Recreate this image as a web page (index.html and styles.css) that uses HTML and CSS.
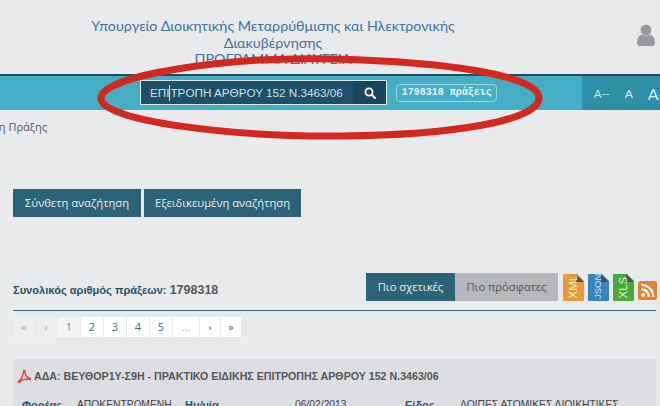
FILE: index.html
```html
<!DOCTYPE html>
<html lang="el">
<head>
    <meta charset="UTF-8">
    <title>Πρόγραμμα Διαύγεια</title>
    <link rel="stylesheet" href="styles.css">
</head>
<body>
    <header class="top">
        <div class="ministry">
            <div>Υπουργείο Διοικητικής Μεταρρύθμισης και Ηλεκτρονικής</div>
            <div>Διακυβέρνησης</div>
            <div>ΠΡΟΓΡΑΜΜΑ ΔΙΑΥΓΕΙΑ</div>
        </div>
        <svg class="user" viewBox="0 0 18 22" width="18" height="22">
            <circle cx="9" cy="6" r="5.4" fill="#97999c"/>
            <path d="M0 19c0-6 3-8 5-8.500 2 1.500 6 1.500 8 0 2 .5 5 2.500 5 8.500 0 2-1 3-3 3H3c-2 0-3-1-3-3z" fill="#97999c"/>
        </svg>
    </header>

    <div class="bar">
        <div class="search">
            <span class="search-text">ΕΠΙ<i class="caret"></i>ΤΡΟΠΗ ΑΡΘΡΟΥ 152 Ν.3463/06</span>
            <span class="search-btn">
                <svg viewBox="0 0 12 12" width="12" height="12">
                    <circle cx="5" cy="5" r="3.600" fill="none" stroke="#fff" stroke-width="1.800"/>
                    <path d="M7.800 7.800L11 11" stroke="#fff" stroke-width="2" stroke-linecap="round"/>
                </svg>
            </span>
        </div>
        <span class="count">1798318 πράξεις</span>
        <div class="sizes">
            <span class="size-s">A--</span>
            <span class="size-m">A</span>
            <span class="size-l">A+</span>
        </div>
    </div>

    <div class="crumb"><span>Αναζήτηση Πράξης</span></div>

    <div class="search-links">
        <a class="btn btn-first">Σύνθετη αναζήτηση</a>
        <a class="btn btn-second">Εξειδικευμένη αναζήτηση</a>
    </div>

    <div class="toolbar">
        <div class="total">Συνολικός αριθμός πράξεων: <b>1798318</b></div>
        <a class="tab tab-on">Πιο σχετικές</a>
        <a class="tab tab-off">Πιο πρόσφατες</a>
        <div class="exports">
            <svg viewBox="0 0 21 27" width="21" height="27">
                <path d="M1 0h13l7 7v19a1 1 0 0 1-1 1H1a1 1 0 0 1-1-1V1a1 1 0 0 1 1-1z" fill="#e79a3c"/>
                <path d="M13 0l8 8h-8z" fill="#4c4f52"/>
                <text class="file-label" transform="translate(13.500 24.500) rotate(-90)" fill="#fff3c0">XML</text>
            </svg>
            <svg viewBox="0 0 21 27" width="21" height="27">
                <path d="M1 0h13l7 7v19a1 1 0 0 1-1 1H1a1 1 0 0 1-1-1V1a1 1 0 0 1 1-1z" fill="#3486bd"/>
                <path d="M13 0l8 8h-8z" fill="#4c4f52"/>
                <text class="file-label file-label-sm" transform="translate(13 25) rotate(-90)" fill="#bfe3f5">JSON</text>
            </svg>
            <svg viewBox="0 0 21 27" width="21" height="27">
                <path d="M1 0h13l7 7v19a1 1 0 0 1-1 1H1a1 1 0 0 1-1-1V1a1 1 0 0 1 1-1z" fill="#4aa83c"/>
                <path d="M13 0l8 8h-8z" fill="#4c4f52"/>
                <text class="file-label" transform="translate(13.500 24.500) rotate(-90)" fill="#d8f5c8">XLS</text>
            </svg>
            <svg class="rss" viewBox="0 0 20 20" width="19" height="19">
                <rect width="20" height="20" rx="3" fill="#e5822f"/>
                <circle cx="5.500" cy="14.500" r="2.200" fill="#fff"/>
                <path d="M3.500 8.500a8 8 0 0 1 8 8M3.500 4a12.500 12.500 0 0 1 12.500 12.500" fill="none" stroke="#fff" stroke-width="2.400"/>
            </svg>
        </div>
    </div>

    <ul class="pager">
        <li class="off">«</li>
        <li class="off">‹</li>
        <li class="cur">1</li>
        <li>2</li>
        <li>3</li>
        <li>4</li>
        <li>5</li>
        <li class="off dots">...</li>
        <li class="arrow">›</li>
        <li class="arrow">»</li>
    </ul>

    <article class="result">
        <h3 class="result-title">
            <svg viewBox="0 0 14 14" width="14" height="14">
                <path d="M1.500 12.500C4 11 6 7 6.500 2.500c0-1.500 1.500-1.500 1.500 0C8 6 10 8.500 12.500 9c1.500.3 1 1.800-.5 1.500C9 10 5 10.500 3 12.800c-1 1-2 .4-1.500-.3z" fill="none" stroke="#e0483c" stroke-width="1.500"/>
            </svg>
            ΑΔΑ: ΒΕΥΘΟΡ1Υ-Σ9Η - ΠΡΑΚΤΙΚΟ ΕΙΔΙΚΗΣ ΕΠΙΤΡΟΠΗΣ ΑΡΘΡΟΥ 152 Ν.3463/06
        </h3>
        <div class="meta">
            <b class="m-a">Φορέας</b><span class="m-b">ΑΠΟΚΕΝΤΡΩΜΕΝΗ</span>
            <b class="m-c">Ημ/νία</b><span class="m-d">06/02/2013</span>
            <b class="m-e">Είδος</b><span>ΛΟΙΠΕΣ ΑΤΟΜΙΚΕΣ ΔΙΟΙΚΗΤΙΚΕΣ</span>
        </div>
    </article>

    <!-- κόκκινος κύκλος πάνω από τη μπάρα -->
    <svg class="circle-mark" viewBox="0 0 660 406" width="660" height="406">
        <path d="M335 59C225 56 98 76 101 99c3 22 130 38 240 37 110-1 198-15 198-38S445 62 335 59z" fill="none" stroke="#d3281f" stroke-width="7"/>
    </svg>
</body>
</html>
```

FILE: styles.css
```css
html, body {
    margin: 0;
    padding: 0;
}

body {
    width: 660px;
    height: 406px;
    overflow: hidden;
    position: relative;
    background-color: #e9eaec;
    font-family: 'Open Sans', sans-serif;
    color: #555;
}

.top {
    height: 74px;
    display: flex;
    box-sizing: border-box;
    padding-top: 18px;
}

.ministry {
    width: 546px;
    text-align: center;
    font-family: 'Lato', 'Open Sans', sans-serif;
    font-size: 14.300px;
    line-height: 16.500px;
    color: #3f719f;
    height: 56px;
    overflow: hidden;
}

.user {
    margin: 6px 0 0 91px;
}

.bar {
    height: 34px;
    border-top: 2px solid #1d4f66;
    background-color: #45adc4;
    display: flex;
    align-items: center;
    padding-left: 140px;
}

.search {
    width: 248px;
    height: 25px;
    box-sizing: border-box;
    border: 1px solid #dcedf1;
    background-color: #1e4f66;
    display: flex;
    margin-top: -1px;
}

.search-text {
    width: 212px;
    box-sizing: border-box;
    padding-left: 9px;
    font-family: 'Liberation Sans', sans-serif;
    font-size: 11.700px;
    line-height: 23px;
    color: #d5dfe4;
    white-space: nowrap;
}

.caret {
    display: inline-block;
    width: 1px;
    height: 16px;
    background-color: #cfe6ec;
    vertical-align: -4px;
}

.search-btn {
    flex: 1;
    background-color: #1a465c;
    display: flex;
    align-items: center;
    justify-content: center;
}

.count {
    margin: -1px 0 0 9px;
    width: 101px;
    height: 18px;
    box-sizing: border-box;
    border: 1px solid #9ed6e3;
    border-radius: 4px;
    font-family: 'Liberation Mono', monospace;
    font-size: 10px;
    font-weight: bold;
    line-height: 16px;
    text-align: center;
    color: #e6f4f7;
    white-space: nowrap;
}

.sizes {
    margin-left: 85px;
    width: 78px;
    flex-shrink: 0;
    align-self: stretch;
    background-color: #2f8fa7;
    display: flex;
    align-items: center;
    color: #dff0f4;
    font-family: 'Lato', sans-serif;
    white-space: nowrap;
}

.size-s {
    font-size: 11px;
    margin-left: 12px;
}

.size-m {
    font-size: 12px;
    margin-left: 15px;
}

.size-l {
    font-size: 16px;
    margin-left: 15px;
}

.crumb {
    width: 47px;
    height: 16px;
    margin-top: 9px;
    display: flex;
    justify-content: flex-end;
    overflow: hidden;
    font-size: 11px;
    line-height: 16px;
    color: #555;
    white-space: nowrap;
}

.crumb span {
    flex-shrink: 0;
}

.search-links {
    display: flex;
    gap: 3px;
    margin: 54px 0 0 13px;
}

.btn {
    height: 28px;
    box-sizing: border-box;
    background-color: #2b6379;
    color: #e6eef1;
    font-size: 11.200px;
    line-height: 28px;
    text-align: center;
    white-space: nowrap;
}

.btn-first {
    width: 128px;
}

.btn-second {
    width: 157px;
}

.toolbar {
    margin: 56px 4px 0 13px;
    height: 38px;
    box-sizing: border-box;
    padding-bottom: 9px;
    border-bottom: 1px solid #2b6379;
    display: flex;
    align-items: stretch;
}

.total {
    width: 353px;
    flex-shrink: 0;
    font-family: 'Liberation Sans', sans-serif;
    font-size: 11.100px;
    font-weight: bold;
    line-height: 34px;
    color: #1f5168;
    white-space: nowrap;
}

.total b {
    font-size: 12.500px;
    color: #555;
}

.tab {
    flex-shrink: 0;
    font-size: 11.200px;
    line-height: 28px;
    text-align: center;
    white-space: nowrap;
}

.tab-on {
    width: 89px;
    background-color: #2b6379;
    color: #e6eef1;
}

.tab-off {
    width: 103px;
    background-color: #b6b7ba;
    color: #555;
}

.exports {
    display: flex;
    align-items: flex-start;
    gap: 4px;
    margin-left: 5px;
    padding-top: 1px;
}

.exports svg {
    flex-shrink: 0;
}

.rss {
    margin-top: 7px;
}

.file-label {
    font-family: 'Liberation Sans', sans-serif;
    font-size: 11.500px;
}

.file-label-sm {
    font-size: 9.500px;
}

.pager {
    list-style: none;
    display: flex;
    margin: 6px 0 0 13px;
    padding: 0;
    height: 20px;
}

.pager li {
    width: 22px;
    margin-right: 1px;
    background-color: #fff;
    color: #3d7187;
    font-size: 11px;
    line-height: 20px;
    text-align: center;
}

.pager .off {
    width: 21.500px;
    background-color: #eeeff0;
    color: #aaa;
}

.pager .cur {
    background-color: #f4f4f5;
    color: #888;
}

.pager .dots {
    background-color: #fff;
    width: 26px;
}

.pager .arrow {
    width: 20px;
}

.result {
    margin: 22px 4px 0 13px;
    height: 60px;
    box-sizing: border-box;
    padding: 9px 4px 0 4px;
    background-color: #dcdee1;
}

.result-title {
    margin: 0;
    display: flex;
    align-items: center;
    gap: 3px;
    font-family: 'Liberation Sans', sans-serif;
    font-size: 10.650px;
    line-height: 16px;
    font-weight: bold;
    color: #555;
    white-space: nowrap;
}

.meta {
    display: flex;
    margin-top: 14px;
    padding-left: 5px;
    font-family: 'Liberation Sans', sans-serif;
    font-size: 10.300px;
    line-height: 14px;
    color: #444;
    white-space: nowrap;
}

.meta b {
    color: #1f5a86;
    font-size: 11px;
}

.m-a {
    width: 55px;
}

.m-b {
    width: 108px;
}

.m-c {
    width: 110px;
}

.m-d {
    width: 110px;
}

.m-e {
    width: 55px;
}

.circle-mark {
    position: absolute;
    left: 0;
    top: 0;
    pointer-events: none;
}
```
